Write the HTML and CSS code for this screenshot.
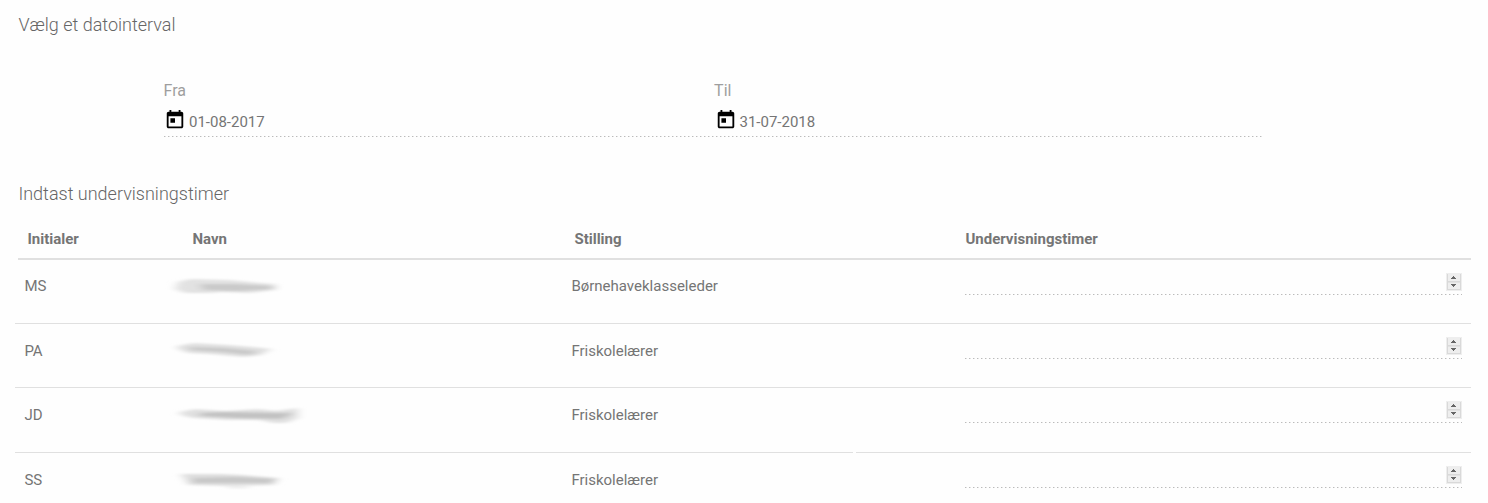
FILE: index.html
```html
<!DOCTYPE html>
<html lang="da">
<head>
<meta charset="utf-8">
<title>Undervisningstimer</title>
<link rel="stylesheet" href="styles.css">
</head>
<body>
<svg class="defs" width="0" height="0" aria-hidden="true">
  <defs>
    <filter id="smear" x="-20%" y="-60%" width="140%" height="220%"><feGaussianBlur stdDeviation="5 1.2"/></filter>
    <symbol id="calendar" viewBox="0 0 24 24"><path d="M19 3h-1V1h-2v2H8V1H6v2H5c-1.11 0-1.99.9-1.99 2L3 19c0 1.1.89 2 2 2h14c1.1 0 2-.9 2-2V5c0-1.1-.9-2-2-2zm0 16H5V8h14v11zM7 10h5v5H7z"/></symbol>
    <symbol id="spin" viewBox="0 0 16 18"><path fill="#eee" d="M0 0h16v18H0z"/><path fill="#d9d9d9" d="M1 1h1v16H1zM14 1h1v16h-1zM1 8h14v1H1zM1 16h14v1H1z"/><path fill="#e2e2e2" d="M2 9h12v1H2z"/><path fill="#666" d="M7 3h1v1h1v1h1v1H5V5h1V4h1zM5 11h5v1H9v1H8v1H7v-1H6v-1H5z"/></symbol>
  </defs>
</svg>
<main class="page">
  <h2 class="title">Vælg et datointerval</h2>
  <section class="dates">
    <label class="date"><span class="date-label">Fra</span>
      <span class="date-value"><svg class="calendar"><use href="#calendar"/></svg><span>01-08-2017</span></span></label>
    <label class="date"><span class="date-label">Til</span>
      <span class="date-value"><svg class="calendar"><use href="#calendar"/></svg><span>31-07-2018</span></span></label>
  </section>
  <h2 class="title title-hours">Indtast undervisningstimer</h2>
  <section class="table">
    <div class="head"><span>Initialer</span><span>Navn</span><span>Stilling</span><span>Undervisningstimer</span></div>
    <div class="row first"><span class="cell">MS</span>
      <svg class="name" viewBox="0 0 145 28"><g filter="url(#smear)"><path fill="#e2e2e2" d="M13 10l12-3 40 1 30 3 15 1v6l-25 3-30-1-8 1H20l-10-4z"/><path fill="#cacaca" d="M35 12l35 0 38 2v3l-35 2-35-1z"/></g></svg>
      <span class="cell">Børnehaveklasseleder</span><span class="hours"><svg class="spin"><use href="#spin"/></svg></span></div>
    <div class="row"><span class="cell">PA</span>
      <svg class="name" viewBox="0 0 145 28"><g filter="url(#smear)" transform="translate(0 1)"><path fill="#e0e0e0" d="M13 9l15-3 35 2 25 2 18 2-10 6-17 2-34-3-22-1-10-4z"/><path fill="#c9c9c9" d="M25 10l35 1 32 3-7 4-28-3-32-2z"/></g></svg>
      <span class="cell">Friskolelærer</span><span class="hours"><svg class="spin"><use href="#spin"/></svg></span></div>
    <div class="row tall"><span class="cell">JD</span>
      <svg class="name" viewBox="0 0 145 28"><g filter="url(#smear)" transform="translate(0 1)"><path fill="#e0e0e0" d="M15 11l15-3 30 2 33-2 18 2 22-3v10l-12 5-13 0-13-3-32 0-35-2-12-3z"/><path fill="#c2c2c2" d="M35 12l25-1 52 1 16 0-11 6-45-1-37-2z"/></g></svg>
      <span class="cell">Friskolelærer</span><span class="hours"><svg class="spin"><use href="#spin"/></svg></span></div>
    <div class="row"><span class="cell">SS</span>
      <svg class="name" viewBox="0 0 145 28"><g filter="url(#smear)" transform="translate(0 1)"><path fill="#dedede" d="M16 8l40 0 22 1 35 3-4 7-41 1-44-1z"/><path fill="#c8c8c8" d="M28 12l42-1 41 2-5 4H28z"/><path fill="#ddd" d="M61 21h22v1H65z"/></g></svg>
      <span class="cell">Friskolelærer</span><span class="hours"><svg class="spin"><use href="#spin"/></svg></span></div>
  </section>
</main>
</body>
</html>
```
FILE: styles.css
```css
* { box-sizing: border-box; }
body { margin: 0; height: 503px; overflow: hidden; background: #fefefe; color: #757575; font: 15px/20px Roboto, sans-serif; }
.defs { display: block; }
.page { padding: 13px 17px 0 15px; }
.title { margin: 0 0 0 3.4px; font-size: 18px; line-height: 24px; font-weight: 300; color: #666; }
.title-hours { margin-top: 45px; }
.dates { display: flex; width: 1100px; height: 56px; margin: 44px 0 0 149px; background: repeating-linear-gradient(90deg, #bbb 0 1px, #e2e2e2 1px 2px, transparent 2px 4px) left bottom / 100% 1px no-repeat; }
.date { width: 550.5px; flex: none; }
.date-label { display: block; margin-left: -0.4px; font-size: 16px; color: #9e9e9e; }
.date-value { display: flex; height: 22px; margin-top: 9px; align-items: center; }
.calendar { width: 22px; height: 22px; margin-top: -2px; color: #000; fill: #000; }
.date-value span { margin: 2px 0 0 3px; }
.table { margin-top: 12px; }
.head { display: grid; grid-template-columns: 165px 382px 391px 1fr; height: 42px; margin-left: 3px; padding: 11px 0 0 9.4px; border-bottom: 2px solid #e0e0e0; font-weight: 700; }
.row { display: grid; grid-template-columns: 141px 406px 393.6px 1fr; height: 64px; padding: 0 9px 0 9.4px; border-bottom: 1px solid #e0e0e0; }
.tall { height: 65px; border-bottom: 0; background: linear-gradient(90deg, #e0e0e0 838px, transparent 838px 841px, #e0e0e0 841px) left bottom / 100% 1px no-repeat; }
.cell { padding-top: 17px; }
.first .cell { padding-top: 16px; }
.name { width: 145px; height: 28px; margin-top: 12px; }
.hours { display: flex; justify-content: flex-end; height: 35px; padding-top: 13px; background: repeating-linear-gradient(90deg, #bbb 0 1px, #e2e2e2 1px 2px, transparent 2px 4px) left bottom / 100% 1px no-repeat; }
.spin { width: 16px; height: 18px; }
```
